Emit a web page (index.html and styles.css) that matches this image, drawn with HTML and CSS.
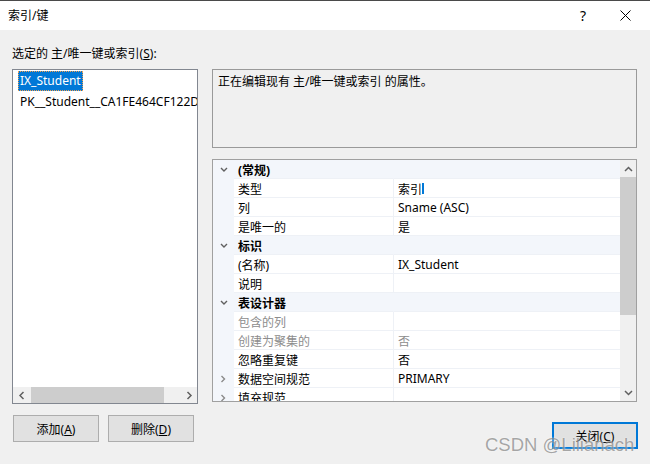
FILE: index.html
```html
<!DOCTYPE html>
<html lang="zh-CN">
<head>
<meta charset="utf-8">
<title>索引/键</title>
<link rel="stylesheet" href="styles.css">
</head>
<body>
<div class="window">
  <div class="titlebar">
    <span class="title">索引/键</span>
    <span class="help">?</span>
    <span class="close">
      <svg width="11" height="11" viewBox="0 0 11 11"><path d="M0.5 0.5 L10.5 10.5 M10.5 0.5 L0.5 10.5" stroke="#000" stroke-width="1" fill="none"/></svg>
    </span>
  </div>
  <div class="body">
    <div class="label">选定的 主/唯一键或索引(<u>S</u>):</div>
    <div class="main">
      <div class="listbox">
        <div class="items">
          <div class="item"><span class="txt sel">IX_Student</span></div>
          <div class="item"><span class="txt">PK__Student__CA1FE464CF122D55</span></div>
        </div>
        <div class="hscroll">
          <span class="arrow"><svg width="8" height="9" viewBox="0 0 8 9"><path d="M5.5 1 L2 4.5 L5.5 8" stroke="#606060" stroke-width="1.5" fill="none"/></svg></span>
          <span class="hthumb"></span>
          <span class="htrack"></span>
          <span class="arrow"><svg width="8" height="9" viewBox="0 0 8 9"><path d="M2.5 1 L6 4.5 L2.5 8" stroke="#606060" stroke-width="1.5" fill="none"/></svg></span>
        </div>
      </div>
      <div class="right">
        <div class="desc">正在编辑现有 主/唯一键或索引 的属性。</div>
        <div class="grid">
          <div class="rows">
            <div class="row cat"><span class="gut"><svg class="chev" width="8" height="6" viewBox="0 0 8 6"><path d="M1 1 L4 4 L7 1" stroke="#606060" stroke-width="1.4" fill="none"/></svg></span><span class="name">(常规)</span><span class="val"></span></div>
            <div class="row"><span class="gut"></span><span class="name">类型</span><span class="val">索引<span class="caret"></span></span></div>
            <div class="row"><span class="gut"></span><span class="name">列</span><span class="val">Sname (ASC)</span></div>
            <div class="row"><span class="gut"></span><span class="name">是唯一的</span><span class="val">是</span></div>
            <div class="row cat"><span class="gut"><svg class="chev" width="8" height="6" viewBox="0 0 8 6"><path d="M1 1 L4 4 L7 1" stroke="#606060" stroke-width="1.4" fill="none"/></svg></span><span class="name">标识</span><span class="val"></span></div>
            <div class="row"><span class="gut"></span><span class="name">(名称)</span><span class="val">IX_Student</span></div>
            <div class="row"><span class="gut"></span><span class="name">说明</span><span class="val"></span></div>
            <div class="row cat"><span class="gut"><svg class="chev" width="8" height="6" viewBox="0 0 8 6"><path d="M1 1 L4 4 L7 1" stroke="#606060" stroke-width="1.4" fill="none"/></svg></span><span class="name">表设计器</span><span class="val"></span></div>
            <div class="row dis"><span class="gut"></span><span class="name">包含的列</span><span class="val"></span></div>
            <div class="row dis"><span class="gut"></span><span class="name">创建为聚集的</span><span class="val">否</span></div>
            <div class="row"><span class="gut"></span><span class="name">忽略重复键</span><span class="val">否</span></div>
            <div class="row"><span class="gut"><svg class="chev" width="6" height="8" viewBox="0 0 6 8"><path d="M1.5 1 L4.5 4 L1.5 7" stroke="#8a8a8a" stroke-width="1.4" fill="none"/></svg></span><span class="name">数据空间规范</span><span class="val">PRIMARY</span></div>
            <div class="row"><span class="gut"><svg class="chev" width="6" height="8" viewBox="0 0 6 8"><path d="M1.5 1 L4.5 4 L1.5 7" stroke="#8a8a8a" stroke-width="1.4" fill="none"/></svg></span><span class="name">填充规范</span><span class="val"></span></div>
          </div>
          <div class="vscroll">
            <span class="varrow"><svg width="9" height="6" viewBox="0 0 9 6"><path d="M1 5 L4.5 1.5 L8 5" stroke="#606060" stroke-width="1.5" fill="none"/></svg></span>
            <span class="vthumb"></span>
            <span class="vtrack"></span>
            <span class="varrow"><svg width="9" height="6" viewBox="0 0 9 6"><path d="M1 1 L4.5 4.5 L8 1" stroke="#606060" stroke-width="1.5" fill="none"/></svg></span>
          </div>
        </div>
      </div>
    </div>
    <div class="footer">
      <button class="btn">添加(<u>A</u>)</button>
      <button class="btn">删除(<u>D</u>)</button>
      <button class="btn primary">关闭(<u>C</u>)</button>
    </div>
  </div>
  <div class="watermark">CSDN @Lilianach</div>
</div>
</body>
</html>
```

FILE: styles.css
```css
* {
  box-sizing: border-box;
}

html, body {
  margin: 0;
  padding: 0;
}

body {
  font-family: "Noto Sans", "Noto Sans CJK SC", sans-serif;
  font-size: 12px;
  color: #000;
}

.window {
  position: relative;
  width: 650px;
  height: 464px;
  overflow: hidden;
  background: #f0f0f0;
}

.titlebar {
  height: 30px;
  background: #fff;
  border-top: 1px solid #4a4a4a;
  display: flex;
  align-items: center;
  padding-left: 8px;
}

.title {
  flex: 1;
  line-height: 16px;
}

.help {
  font-size: 14px;
  line-height: 16px;
  margin-right: 34px;
}

.close {
  display: flex;
  margin-right: 19px;
}

.body {
  padding: 0 12px;
}

.label {
  margin-top: 16px;
  line-height: 16px;
}

.main {
  margin-top: 7px;
  display: flex;
  gap: 14px;
  height: 335px;
}

.listbox {
  width: 186px;
  border: 1px solid #828790;
  background: #fff;
  display: flex;
  flex-direction: column;
}

.items {
  flex: 1;
  overflow: hidden;
  padding-top: 1px;
  padding-left: 5px;
}

.item {
  height: 21px;
  white-space: nowrap;
  overflow: hidden;
}

.txt {
  display: inline-block;
  line-height: 20px;
  padding: 0 2px;
}

.sel {
  background: #0078d7;
  color: #fff;
  outline: 1px dotted #f0a050;
  outline-offset: -1px;
}

.hscroll {
  height: 16px;
  display: flex;
  background: #f0f0f0;
}

.arrow {
  width: 17px;
  display: flex;
  align-items: center;
  justify-content: center;
}

.hthumb {
  width: 133px;
  margin-left: 1px;
  background: #cdcdcd;
}

.htrack {
  flex: 1;
}

.right {
  width: 425px;
  display: flex;
  flex-direction: column;
  gap: 11px;
}

.desc {
  height: 79px;
  border: 1px solid #9a9a9a;
  background: #f0f0f0;
  padding: 4px 5px;
  line-height: 16px;
}

.grid {
  height: 243px;
  border: 1px solid #a0a0a0;
  background: #fff;
  display: flex;
}

.rows {
  flex: 1;
  overflow: hidden;
}

.row {
  height: 19px;
  display: grid;
  grid-template-columns: 21px 160px 1fr;
}

.row > span {
  display: flex;
  align-items: center;
  white-space: nowrap;
  overflow: hidden;
  padding-top: 1px;
}

.gut {
  background: #f3f6fb;
  padding-left: 7px;
}

.name {
  padding-left: 4px;
  border-bottom: 1px solid #eef1f6;
  border-right: 1px solid #eef1f6;
}

.val {
  padding-left: 4px;
  border-bottom: 1px solid #eef1f6;
}

.cat .name,
.cat .val {
  background: #f3f6fb;
  border-right-color: #f3f6fb;
  font-weight: bold;
}

.dis .name,
.dis .val {
  color: #8d8d8d;
}

.caret {
  display: inline-block;
  width: 2px;
  height: 11px;
  background: #0078d7;
}

.vscroll {
  width: 16px;
  background: #f0f0f0;
  display: flex;
  flex-direction: column;
}

.varrow {
  height: 17px;
  display: flex;
  align-items: center;
  justify-content: center;
}

.vthumb {
  height: 138px;
  background: #cdcdcd;
}

.vtrack {
  flex: 1;
}

.footer {
  margin-top: 11px;
  display: flex;
  align-items: flex-start;
  padding-left: 1px;
}

.btn {
  width: 86px;
  height: 27px;
  border: 1px solid #adadad;
  background: #e1e1e1;
  font-family: "Noto Sans", "Noto Sans CJK SC", sans-serif;
  font-size: 12px;
  color: #000;
  padding: 0;
  margin-right: 9px;
}

.btn.primary {
  margin: 7px 0 0 auto;
  border: 2px solid #0078d7;
}

.watermark {
  position: absolute;
  left: 485px;
  top: 434px;
  font-family: "Liberation Sans", Arial, sans-serif;
  font-size: 18.5px;
  line-height: 22px;
  color: rgba(110, 110, 110, 0.6);
  text-shadow: 0 0 2px rgba(255, 255, 255, 0.8);
  white-space: nowrap;
}
```
